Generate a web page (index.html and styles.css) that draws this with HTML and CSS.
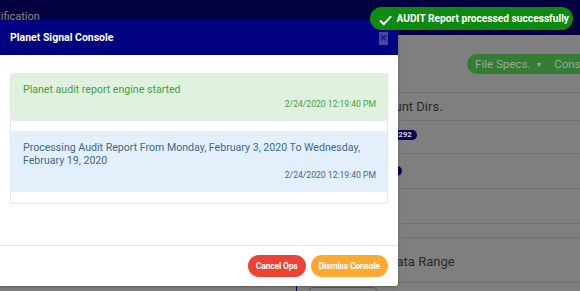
FILE: index.html
```html
<!DOCTYPE html>
<html lang="en">

<head>
    <meta charset="UTF-8">
    <meta name="viewport" content="width=device-width, initial-scale=1.0">
    <title>Planet Signal Console</title>

    <link rel="stylesheet" href="styles.css">
</head>

<body>
    <div class="page">
        <header class="topbar">
            <span class="topbar-title">Notification</span>
        </header>

        <main class="content">
            <section class="left-pane">
                <div class="left-bottom">
                    <div class="nav-strip"></div>
                    <div class="grey-box"></div>
                </div>
            </section>

            <section class="right-pane">
                <div class="row row-tools">
                    <div class="pill-group">
                        <span class="pill-item">File Specs. <span class="caret">&#9662;</span></span>
                        <span class="pill-item">Console</span>
                    </div>
                </div>
                <div class="row row-a"><span class="row-label label-dirs">Account Dirs.</span></div>
                <div class="row row-b"><span class="badge badge-count">10292</span></div>
                <div class="row row-c"><span class="badge badge-small">12</span></div>
                <div class="row row-d"></div>
                <div class="row row-e"></div>
                <div class="row row-f"><span class="row-label label-range">Data Range</span></div>
                <div class="row-tail"><span class="outline-btn"></span></div>
            </section>
        </main>
    </div>

    <div class="modal">
        <div class="modal-header">
            <span class="modal-title">Planet Signal Console</span>
            <span class="modal-close">&times;</span>
        </div>

        <div class="modal-body">
            <div class="log">
                <div class="log-item log-success">
                    <div class="log-text">Planet audit report engine started</div>
                    <div class="log-time">2/24/2020 12:19:40 PM</div>
                </div>
                <div class="log-item log-info">
                    <div class="log-text">Processing Audit Report From Monday, February 3, 2020 To Wednesday, February 19, 2020</div>
                    <div class="log-time">2/24/2020 12:19:40 PM</div>
                </div>
            </div>
        </div>

        <div class="modal-footer">
            <button class="btn btn-cancel">Cancel Ops</button>
            <button class="btn btn-dismiss">Dismiss Console</button>
        </div>
    </div>

    <div class="toast">
        <svg class="toast-icon" width="13" height="11" viewBox="0 0 13 11">
            <path d="M1.5 6 L4.8 9.2 L11.5 1.8" fill="none" stroke="#fff" stroke-width="2" stroke-linecap="round" stroke-linejoin="round" />
        </svg>
        <span>AUDIT Report processed successfully</span>
    </div>
</body>

</html>
```

FILE: styles.css
```css
body {
    margin: 0;
    width: 580px;
    height: 291px;
    overflow: hidden;
    font-family: Roboto, "Liberation Sans", sans-serif;
    background-color: #7f7f7f;
}

.page {
    display: flex;
    flex-direction: column;
    height: 291px;
}

.topbar {
    height: 35px;
    flex: none;
    background-color: #030040;
    display: flex;
    align-items: flex-start;
    overflow: hidden;
}

.topbar-title {
    margin: 10px 0 0 -17px;
    font-size: 11px;
    color: #8a8a8a;
}

.content {
    display: flex;
    flex: 1;
}

.left-pane {
    width: 296px;
    flex: none;
    border-right: 1px solid #0a0a40;
    display: flex;
    flex-direction: column;
    justify-content: flex-end;
}

.left-bottom {
    display: flex;
    gap: 10px;
    padding-left: 8px;
    height: 4px;
}

.nav-strip {
    width: 249px;
    background-color: #05053c;
    border-radius: 6px 6px 0 0;
}

.grey-box {
    width: 11px;
    background-color: #6a6a6a;
}

.right-pane {
    flex: 1;
    display: flex;
    flex-direction: column;
    overflow: hidden;
}

.row {
    border-bottom: 1px solid #707070;
    display: flex;
    align-items: center;
    padding-left: 72px;
}

.row-tools {
    height: 57px;
    justify-content: flex-end;
    padding-left: 0;
}

.pill-group {
    display: flex;
    align-items: center;
    gap: 13px;
    height: 20px;
    margin-right: -26px;
    padding: 0 10px 0 8px;
    background-color: #367b36;
    border-radius: 10px;
    font-size: 11.5px;
    color: #9aaa9a;
    white-space: nowrap;
}

.caret {
    font-size: 8px;
    margin-left: 4px;
    vertical-align: 1px;
}

.row-a {
    height: 27px;
}

.row-b {
    height: 32px;
}

.row-c {
    height: 34px;
}

.row-d {
    height: 34px;
}

.row-e {
    height: 13px;
}

.row-f {
    height: 44px;
}

.row-label {
    font-size: 13px;
    color: #2a2a2a;
    white-space: nowrap;
}

.label-dirs {
    margin-left: -4px;
}

.label-range {
    margin-left: 19px;
    margin-top: 2px;
}

.badge {
    padding: 0 5px;
    height: 10px;
    line-height: 10px;
    border-radius: 5px;
    background-color: #0b0050;
    color: #d0d0e0;
    font-size: 8px;
    font-weight: bold;
}

.badge-count {
    margin: -4px 0 0 15px;
}

.badge-small {
    margin-left: 14px;
}

.row-tail {
    padding: 4px 0 0 11px;
}

.outline-btn {
    display: block;
    width: 68px;
    height: 10px;
    border: 1px solid #4a5a7a;
    border-radius: 5px;
}

/* console dialog */

.modal {
    position: absolute;
    left: 0;
    top: 20px;
    width: 398px;
    height: 266px;
    display: flex;
    flex-direction: column;
    background-color: #fff;
    border-radius: 0 0 3px 0;
    box-shadow: 0 1px 3px rgba(0, 0, 0, 0.3);
}

.modal-header {
    height: 35px;
    flex: none;
    display: flex;
    align-items: center;
    justify-content: space-between;
    padding: 0 10px;
    background-color: #000080;
}

.modal-title {
    color: #fff;
    font-size: 10.5px;
    font-weight: bold;
}

.modal-close {
    width: 9px;
    height: 13px;
    line-height: 12px;
    margin-top: 1px;
    text-align: center;
    font-size: 13px;
    background-color: #4646a6;
    color: #15155a;
}

.modal-body {
    flex: 1;
    padding: 18px 10px 0;
}

.log {
    border: 1px solid #e6e6e6;
    border-top: none;
    border-radius: 3px;
    padding-bottom: 1px;
}

.log-item {
    padding: 10px 11px 10px 12px;
    margin-bottom: 10px;
    font-size: 10.6px;
    line-height: 13px;
    border-radius: 2px;
}

.log-success {
    background-color: #e1f1df;
    color: #43a047;
}

.log-info {
    background-color: #e3effb;
    color: #3f6a8c;
}

.log-time {
    text-align: right;
    font-size: 8.6px;
    margin-top: 2px;
}

.modal-footer {
    height: 40px;
    flex: none;
    border-top: 1px solid #e4e4e4;
    display: flex;
    justify-content: flex-end;
    align-items: center;
    gap: 5px;
    padding: 0 10px;
}

.btn {
    border: none;
    height: 22px;
    padding: 0 8px;
    border-radius: 11px;
    color: #fff;
    font-family: Roboto, "Liberation Sans", sans-serif;
    font-size: 8.6px;
    font-weight: bold;
    letter-spacing: -0.2px;
}

.btn-cancel {
    background-color: #ef4136;
}

.btn-dismiss {
    background-color: #fea82f;
}

/* toast */

.toast {
    position: absolute;
    top: 7px;
    right: 7px;
    height: 23px;
    display: flex;
    align-items: center;
    gap: 5px;
    padding: 0 4px 0 9px;
    background-color: #0f8a10;
    border-radius: 12px;
    color: #fff;
    font-size: 10.2px;
    font-weight: bold;
}

.toast-icon {
    margin-top: 3px;
}
```
